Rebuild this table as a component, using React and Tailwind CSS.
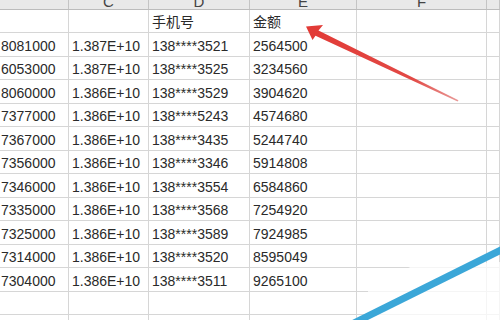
import React from "react";

const rows = [
  ["8081000", "1.387E+10", "138****3521", "2564500"],
  ["6053000", "1.387E+10", "138****3525", "3234560"],
  ["8060000", "1.386E+10", "138****3529", "3904620"],
  ["7377000", "1.386E+10", "138****5243", "4574680"],
  ["7367000", "1.386E+10", "138****3435", "5244740"],
  ["7356000", "1.386E+10", "138****3346", "5914808"],
  ["7346000", "1.386E+10", "138****3554", "6584860"],
  ["7335000", "1.386E+10", "138****3568", "7254920"],
  ["7325000", "1.386E+10", "138****3589", "7924985"],
  ["7314000", "1.386E+10", "138****3520", "8595049"],
  ["7304000", "1.386E+10", "138****3511", "9265100"],
];

const widths = ["w-[69px]", "w-[80px]", "w-[101px]", "w-[107px]", "w-[130px]", "flex-1"];

function Row({ cells, h }) {
  return (
    <div className={`flex border-b border-[#d6d6d6] ${h}`}>
      {widths.map((w, i) => (
        <div
          key={i}
          className={`${w} shrink-0 border-r border-[#d6d6d6] flex items-end overflow-hidden whitespace-nowrap ${i === 0 ? "pl-[1px]" : "pl-[3px]"} pb-[1px] text-[14px] leading-[18px] text-[#2a2a2a]`}
        >
          {cells[i] || ""}
        </div>
      ))}
    </div>
  );
}

export default function App() {
  const letters = ["", "C", "D", "E", "F", ""];
  const allRows = [["", "", "手机号", "金额"], ...rows, [], []];
  return (
    <div
      className="relative w-[500px] h-[320px] overflow-hidden bg-white"
      style={{ fontFamily: '"Liberation Sans", "Noto Sans CJK SC", sans-serif' }}
    >
      <div className="flex h-[10px] bg-[#e9e9e9] border-b border-[#bcbcbc]">
        {widths.map((w, i) => (
          <div
            key={i}
            className={`${w} shrink-0 border-r border-[#c4c4c4] overflow-hidden flex justify-center`}
          >
            <span className="block -mt-[6px] text-[15px] leading-[15px] text-[#444]">
              {letters[i]}
            </span>
          </div>
        ))}
      </div>
      {allRows.map((r, i) => (
        <Row key={i} cells={r} h={i % 2 === 0 ? "h-[23px]" : "h-[24px]"} />
      ))}

      <svg className="absolute inset-0" width="500" height="320" viewBox="0 0 500 320">
        <defs>
          <linearGradient id="ar" x1="307" y1="27" x2="458" y2="101" gradientUnits="userSpaceOnUse">
            <stop offset="0" stopColor="#e23a36" />
            <stop offset="0.7" stopColor="#e24a46" />
            <stop offset="1" stopColor="#e99a98" />
          </linearGradient>
        </defs>
        <polygon
          points="306,26.5 323,25 318.5,30.5 458.5,100.3 457.6,101.5 315.5,35.8 312.5,40"
          fill="url(#ar)"
        />
        <polygon points="368,290 412,266 500,262 500,320 368,320" fill="white" opacity="0.75" />
        <line x1="503" y1="249" x2="352" y2="324" stroke="#3ba7d8" strokeWidth="7" />
      </svg>
    </div>
  );
}
